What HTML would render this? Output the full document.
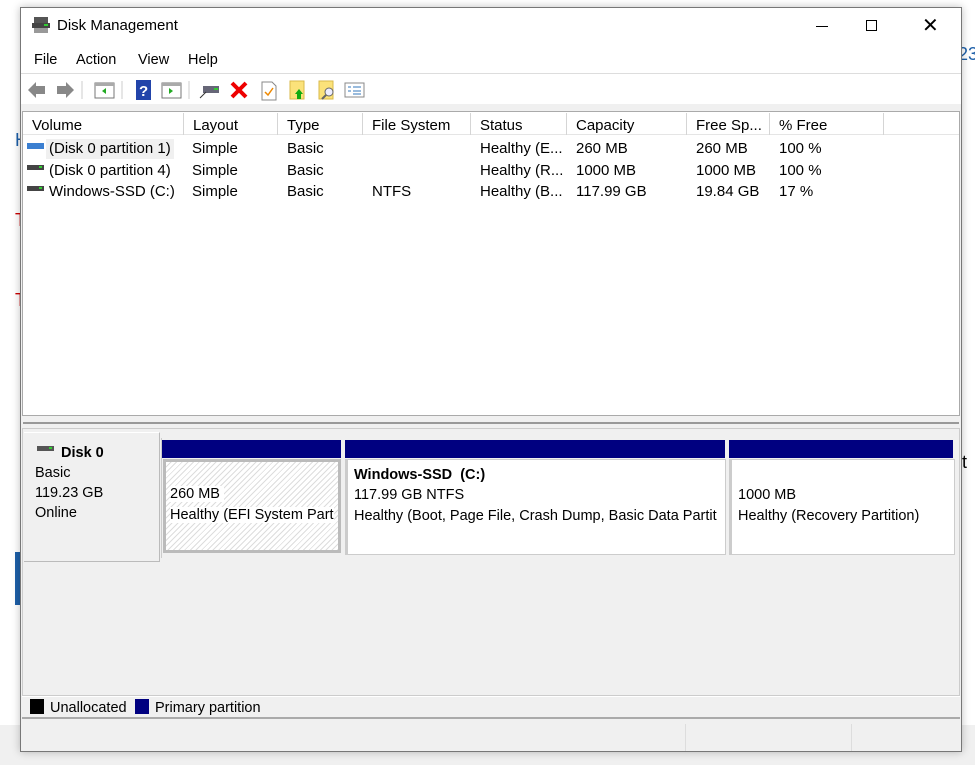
<!DOCTYPE html>
<html><head><meta charset="utf-8"><style>
*{margin:0;padding:0;box-sizing:border-box}
body{width:975px;height:765px;position:relative;overflow:hidden;background:#fff;font-family:"Liberation Sans",sans-serif;font-size:14.5px;color:#000}
.a{position:absolute}
.t{position:absolute;white-space:nowrap}
.hdr{position:absolute;top:113px;height:22px;border-right:1px solid #d5d5d5;padding-left:9px;line-height:25px;font-size:15px}
.row{position:absolute;font-size:15px;white-space:nowrap}
</style></head><body>
<div class="a" style="left:0;top:725px;width:975px;height:40px;background:#f0f0f0"></div>
<div class="a" style="left:15px;top:552px;width:6px;height:53px;background:#1d5fa8"></div>
<div class="t" style="left:958px;top:44px;color:#1d5fa8;font-size:18px">23</div>
<div class="t" style="left:962px;top:452px;font-size:18px">t</div>
<div class="t" style="left:15px;top:130px;color:#1d5fa8;font-size:18px">H</div>
<div class="t" style="left:15px;top:210px;color:#c00;font-size:18px">T</div>
<div class="t" style="left:15px;top:290px;color:#c00;font-size:18px">T</div>
<div class="a" style="left:20px;top:7px;width:942px;height:745px;background:#f0f0f0;border:1px solid #777;box-shadow:0 0 8px rgba(0,0,0,.25)"></div>
<div class="a" style="left:21px;top:8px;width:940px;height:65px;background:#fff"></div>
<svg class="a" style="left:31px;top:16px" width="20" height="18"><rect x="3" y="1" width="14" height="7" fill="#555"/><rect x="1" y="7" width="18" height="5" fill="#444"/><rect x="13" y="8" width="4" height="2" fill="#3c3"/><rect x="3" y="12" width="14" height="5" fill="#999"/></svg>
<div class="t" style="left:57px;top:17px;font-size:15px">Disk Management</div>
<div class="a" style="left:816px;top:26px;width:12px;height:1px;background:#000"></div>
<div class="a" style="left:866px;top:20px;width:11px;height:11px;border:1px solid #000"></div>
<div class="t" style="left:922px;top:13px;font-size:20px;font-weight:300">&#10005;</div>
<div class="t" style="left:34px;top:52px;font-size:14.5px">File</div>
<div class="t" style="left:76px;top:52px;font-size:14.5px">Action</div>
<div class="t" style="left:138px;top:52px;font-size:14.5px">View</div>
<div class="t" style="left:188px;top:52px;font-size:14.5px">Help</div>
<div class="a" style="left:21px;top:73px;width:940px;height:1px;background:#ddd"></div>
<div class="a" style="left:21px;top:74px;width:940px;height:30px;background:#fff"></div>
<svg class="a" style="left:26px;top:79px" width="360" height="22">
<path d="M2 11 L10 3 V7 H19 V15 H10 V19 Z" fill="#888"/>
<path d="M48 11 L40 3 V7 H31 V15 H40 V19 Z" fill="#888"/>
<line x1="56" y1="2" x2="56" y2="20" stroke="#ccc"/>
<rect x="69" y="4" width="19" height="15" fill="#fff" stroke="#777"/><rect x="69" y="4" width="19" height="3" fill="#aaa"/><path d="M80 9 L76 12 L80 15Z" fill="#2a2"/>
<line x1="96" y1="2" x2="96" y2="20" stroke="#ccc"/>
<rect x="110" y="1" width="15" height="20" fill="#2244aa"/><text x="113" y="17" fill="#fff" font-size="15" font-weight="bold" font-family="Liberation Sans">?</text>
<rect x="136" y="4" width="19" height="15" fill="#fff" stroke="#777"/><rect x="136" y="4" width="19" height="3" fill="#aaa"/><path d="M143 9 L147 12 L143 15Z" fill="#2a2"/>
<line x1="163" y1="2" x2="163" y2="20" stroke="#ccc"/>
<rect x="177" y="7" width="16" height="7" fill="#667"/><rect x="188" y="9" width="4" height="2" fill="#3c3"/><line x1="174" y1="19" x2="180" y2="13" stroke="#333"/>
<path d="M206 4 L220 18 M220 4 L206 18" stroke="#e00" stroke-width="4"/>
<path d="M236 3 H246 L250 7 V21 H236 Z" fill="#fff" stroke="#888"/><path d="M239 13 L242 16 L247 9" stroke="#e80" stroke-width="1.5" fill="none"/>
<rect x="264" y="2" width="14" height="18" fill="#fbe27a" stroke="#d9b94a"/><path d="M273 10 L277 15 H275 V20 H271 V15 H269Z" fill="#1a1"/>
<rect x="293" y="2" width="14" height="18" fill="#fbe27a" stroke="#d9b94a"/><circle cx="303" cy="13" r="4" fill="#eef" stroke="#666"/><line x1="300" y1="16" x2="296" y2="20" stroke="#666" stroke-width="2"/>
<rect x="319" y="4" width="19" height="14" fill="#fff" stroke="#888"/><path d="M322 8h3M322 12h3M327 8h8M327 12h8M327 15h8" stroke="#37b"/>
</svg>
<div class="a" style="left:22px;top:111px;width:938px;height:305px;background:#fff;border:1px solid #aaa"></div>
<div class="a" style="left:23px;top:112px;width:936px;height:23px;background:#fff;border-bottom:1px solid #e5e5e5"></div>
<div class="hdr" style="left:23px;width:161px">Volume</div>
<div class="hdr" style="left:184px;width:94px">Layout</div>
<div class="hdr" style="left:278px;width:85px">Type</div>
<div class="hdr" style="left:363px;width:108px">File System</div>
<div class="hdr" style="left:471px;width:96px">Status</div>
<div class="hdr" style="left:567px;width:120px">Capacity</div>
<div class="hdr" style="left:687px;width:83px">Free Sp...</div>
<div class="hdr" style="left:770px;width:114px">% Free</div>
<div class="a" style="left:46px;top:139px;width:128px;height:20px;background:#f0f0f0"></div>
<svg class="a" style="left:27px;top:141px" width="18" height="60"><rect x="0" y="2" width="17" height="6" fill="#3b7fd1"/><rect x="0" y="24" width="17" height="5" fill="#444"/><rect x="12" y="25" width="3" height="2" fill="#3c3"/><rect x="0" y="45" width="17" height="5" fill="#444"/><rect x="12" y="46" width="3" height="2" fill="#3c3"/></svg>
<div class="row" style="left:49px;top:140px">(Disk 0 partition 1)</div>
<div class="row" style="left:49px;top:162px">(Disk 0 partition 4)</div>
<div class="row" style="left:49px;top:183px">Windows-SSD (C:)</div>
<div class="row" style="left:192px;top:140px">Simple</div><div class="row" style="left:192px;top:162px">Simple</div><div class="row" style="left:192px;top:183px">Simple</div>
<div class="row" style="left:287px;top:140px">Basic</div><div class="row" style="left:287px;top:162px">Basic</div><div class="row" style="left:287px;top:183px">Basic</div>
<div class="row" style="left:372px;top:183px">NTFS</div>
<div class="row" style="left:480px;top:140px">Healthy (E...</div><div class="row" style="left:480px;top:162px">Healthy (R...</div><div class="row" style="left:480px;top:183px">Healthy (B...</div>
<div class="row" style="left:576px;top:140px">260 MB</div><div class="row" style="left:576px;top:162px">1000 MB</div><div class="row" style="left:576px;top:183px">117.99 GB</div>
<div class="row" style="left:696px;top:140px">260 MB</div><div class="row" style="left:696px;top:162px">1000 MB</div><div class="row" style="left:696px;top:183px">19.84 GB</div>
<div class="row" style="left:779px;top:140px">100 %</div><div class="row" style="left:779px;top:162px">100 %</div><div class="row" style="left:779px;top:183px">17 %</div>
<div class="a" style="left:23px;top:416px;width:936px;height:8px;background:#f0f0f0;border-bottom:2px solid #999"></div>
<div class="a" style="left:22px;top:428px;width:938px;height:268px;border:1px solid #ccc;background:#f0f0f0"></div>
<div class="a" style="left:24px;top:432px;width:136px;height:130px;background:#f0f0f0;border-right:1px solid #bbb;border-bottom:1px solid #bbb;border-top:1px solid #fff"></div>
<svg class="a" style="left:37px;top:446px" width="18" height="8"><rect width="17" height="5" fill="#555"/><rect x="12" y="1" width="3" height="2" fill="#3c3"/></svg>
<div class="t" style="left:61px;top:445px;font-weight:bold">Disk 0</div>
<div class="t" style="left:35px;top:465px">Basic</div>
<div class="t" style="left:35px;top:485px">119.23 GB</div>
<div class="t" style="left:35px;top:505px">Online</div>
<div class="a" style="left:161px;top:438px;width:795px;height:120px;background:#f0f0f0;border-left:1px solid #ccc"></div>
<div class="a" style="left:162px;top:440px;width:179px;height:18px;background:#000080"></div>
<div class="a" style="left:345px;top:440px;width:380px;height:18px;background:#000080"></div>
<div class="a" style="left:729px;top:440px;width:224px;height:18px;background:#000080"></div>
<div class="a" style="left:163px;top:459px;width:178px;height:94px;background:#bbb"></div>
<div class="a" style="left:166px;top:462px;width:172px;height:88px;background:repeating-linear-gradient(135deg,#fff 0 3px,#ddd 3px 4px)"></div>
<div class="t" style="left:170px;top:486px;background:#fff;padding-right:4px">260 MB</div>
<div class="t" style="left:170px;top:507px;background:#fff">Healthy (EFI System Part</div>
<div class="a" style="left:345px;top:459px;width:381px;height:96px;background:#fff;border:1px solid #ccc;border-left:3px solid #ccc"></div>
<div class="t" style="left:354px;top:467px;font-weight:bold">Windows-SSD &nbsp;(C:)</div>
<div class="t" style="left:354px;top:487px">117.99 GB NTFS</div>
<div class="t" style="left:354px;top:508px">Healthy (Boot, Page File, Crash Dump, Basic Data Partit</div>
<div class="a" style="left:729px;top:459px;width:226px;height:96px;background:#fff;border:1px solid #ccc;border-left:3px solid #ccc"></div>
<div class="t" style="left:738px;top:487px">1000 MB</div>
<div class="t" style="left:738px;top:508px">Healthy (Recovery Partition)</div>
<div class="a" style="left:22px;top:696px;width:938px;height:23px;background:#f0f0f0;border-top:1px solid #fff;border-bottom:2px solid #aaa"></div>
<div class="a" style="left:30px;top:699px;width:14px;height:15px;background:#000"></div>
<div class="t" style="left:50px;top:700px">Unallocated</div>
<div class="a" style="left:135px;top:699px;width:14px;height:15px;background:#000080"></div>
<div class="t" style="left:155px;top:700px">Primary partition</div>
<div class="a" style="left:685px;top:724px;width:1px;height:27px;background:#ddd"></div>
<div class="a" style="left:851px;top:724px;width:1px;height:27px;background:#ddd"></div>
</body></html>
